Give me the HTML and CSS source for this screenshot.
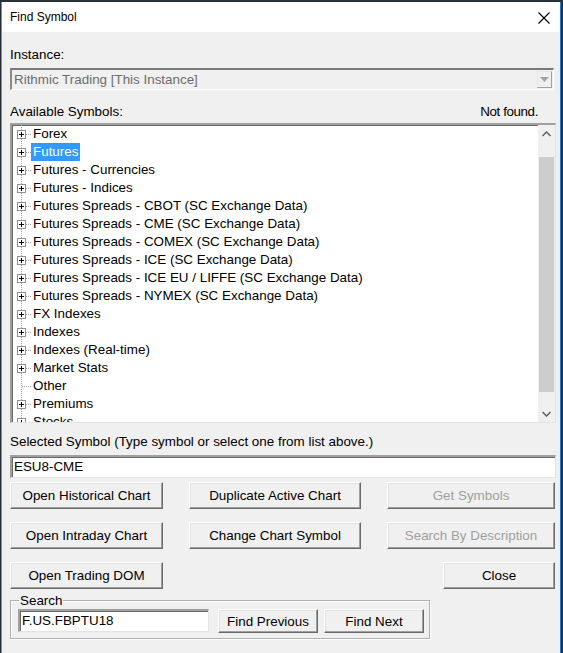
FILE: index.html
```html
<!DOCTYPE html>
<html>
<head>
<meta charset="utf-8">
<title>Find Symbol</title>
<link rel="stylesheet" href="styles.css">
</head>
<body>
<div class="dialog">
  <div class="titlebar">
    <span class="title">Find Symbol</span>
    <svg class="close-x" width="12" height="12" viewBox="0 0 12 12"><path d="M0.5 0.5 L11.5 11.5 M11.5 0.5 L0.5 11.5" stroke="#000" stroke-width="1.1" fill="none"/></svg>
  </div>
  <div class="body">
    <div class="label instance-label">Instance:</div>
    <div class="combo">
      <span class="combo-text">Rithmic Trading [This Instance]</span>
      <span class="combo-btn"><svg width="9" height="5" viewBox="0 0 9 5"><path d="M0 0 H9 L4.5 5 Z" fill="#a3a3a3"/></svg></span>
    </div>
    <div class="label-row">
      <span>Available Symbols:</span>
      <span class="status">Not found.</span>
    </div>
    <div class="tree">
      <ul class="tree-list">
        <li><svg class="twig" width="19" height="18"><use href="#node"/></svg><span class="name">Forex</span></li>
        <li><svg class="twig" width="19" height="18"><use href="#node"/></svg><span class="name selected">Futures</span></li>
        <li><svg class="twig" width="19" height="18"><use href="#node"/></svg><span class="name">Futures - Currencies</span></li>
        <li><svg class="twig" width="19" height="18"><use href="#node"/></svg><span class="name">Futures - Indices</span></li>
        <li><svg class="twig" width="19" height="18"><use href="#node"/></svg><span class="name">Futures Spreads - CBOT (SC Exchange Data)</span></li>
        <li><svg class="twig" width="19" height="18"><use href="#node"/></svg><span class="name">Futures Spreads - CME (SC Exchange Data)</span></li>
        <li><svg class="twig" width="19" height="18"><use href="#node"/></svg><span class="name">Futures Spreads - COMEX (SC Exchange Data)</span></li>
        <li><svg class="twig" width="19" height="18"><use href="#node"/></svg><span class="name">Futures Spreads - ICE (SC Exchange Data)</span></li>
        <li><svg class="twig" width="19" height="18"><use href="#node"/></svg><span class="name">Futures Spreads - ICE EU / LIFFE (SC Exchange Data)</span></li>
        <li><svg class="twig" width="19" height="18"><use href="#node"/></svg><span class="name">Futures Spreads - NYMEX (SC Exchange Data)</span></li>
        <li><svg class="twig" width="19" height="18"><use href="#node"/></svg><span class="name">FX Indexes</span></li>
        <li><svg class="twig" width="19" height="18"><use href="#node"/></svg><span class="name">Indexes</span></li>
        <li><svg class="twig" width="19" height="18"><use href="#node"/></svg><span class="name">Indexes (Real-time)</span></li>
        <li><svg class="twig" width="19" height="18"><use href="#node"/></svg><span class="name">Market Stats</span></li>
        <li><svg class="twig" width="19" height="18"><use href="#leaf"/></svg><span class="name">Other</span></li>
        <li><svg class="twig" width="19" height="18"><use href="#node"/></svg><span class="name">Premiums</span></li>
        <li><svg class="twig" width="19" height="18"><use href="#node"/></svg><span class="name">Stocks</span></li>
      </ul>
      <div class="scrollbar">
        <div class="arrow"><svg width="9" height="6" viewBox="0 0 9 6"><path d="M0.5 5 L4.5 1 L8.5 5" stroke="#606060" stroke-width="1.5" fill="none"/></svg></div>
        <div class="track"><div class="thumb"></div></div>
        <div class="arrow"><svg width="9" height="6" viewBox="0 0 9 6"><path d="M0.5 1 L4.5 5 L8.5 1" stroke="#606060" stroke-width="1.5" fill="none"/></svg></div>
      </div>
    </div>
    <div class="label selected-label">Selected Symbol (Type symbol or select one from list above.)</div>
    <div class="field symbol-field">ESU8-CME</div>
    <div class="button-grid">
      <div class="btn">Open Historical Chart</div>
      <div class="btn">Duplicate Active Chart</div>
      <div class="btn disabled">Get Symbols</div>
      <div class="btn">Open Intraday Chart</div>
      <div class="btn">Change Chart Symbol</div>
      <div class="btn disabled">Search By Description</div>
      <div class="btn">Open Trading DOM</div>
      <div></div>
      <div class="btn close-btn">Close</div>
    </div>
    <fieldset class="search">
      <legend>Search</legend>
      <div class="field search-field">F.US.FBPTU18</div>
      <div class="btn find-btn">Find Previous</div>
      <div class="btn find-btn">Find Next</div>
    </fieldset>
  </div>
</div>

<svg width="0" height="0" class="defs">
  <defs>
    <g id="leaf">
      <path d="M9.5 0 V18" stroke="#a0a0a0" stroke-dasharray="1 1" fill="none"/>
      <path d="M10 9.5 H19" stroke="#a0a0a0" stroke-dasharray="1 1" fill="none"/>
    </g>
    <g id="node">
      <path d="M9.5 0 V18" stroke="#a0a0a0" stroke-dasharray="1 1" fill="none"/>
      <path d="M14 9.5 H19" stroke="#a0a0a0" stroke-dasharray="1 1" fill="none"/>
      <rect x="5.5" y="5.5" width="8" height="8" fill="#fff" stroke="#919191"/>
      <path d="M7 9.5 H12 M9.5 7 V12" stroke="#000" fill="none"/>
    </g>
  </defs>
</svg>
</body>
</html>
```

FILE: styles.css
```css
html, body {
  margin: 0;
  padding: 0;
}

body {
  width: 563px;
  height: 653px;
  overflow: hidden;
  background: #26303a;
  font-family: "Liberation Sans", Arial, sans-serif;
  font-size: 13.4px;
  color: #000;
}

.defs {
  position: absolute;
}

.dialog {
  margin-top: 2px;
  margin-left: 1px;
  width: 560px;
  height: 660px;
  background: #f0f0f0;
  border-left: 1px solid #8a8a8a;
  border-right: 1px solid #1b7bd0;
  box-sizing: border-box;
}

.titlebar {
  height: 30px;
  background: #fff;
  display: flex;
  align-items: center;
  justify-content: space-between;
  padding: 0 10px 0 8px;
}

.title {
  font-size: 12px;
}

.close-x {
  display: block;
  margin-top: 1px;
}

.body {
  padding: 0 5px 0 8px;
  display: flex;
  flex-direction: column;
}

.label {
  line-height: 15px;
}

.instance-label {
  margin-top: 15px;
}

/* disabled drop-down list */
.combo {
  margin-top: 6px;
  height: 22px;
  width: 544px;
  box-sizing: border-box;
  border-style: solid;
  border-width: 2px 1px 1px 2px;
  border-color: #7a7a7a #fff #fff #8a8a8a;
  display: flex;
  align-items: center;
  justify-content: space-between;
}

.combo-text {
  color: #6d6d6d;
  padding-left: 2px;
}

.combo-btn {
  width: 15px;
  height: 17px;
  margin-right: 1px;
  box-sizing: border-box;
  border: 1px solid #e8e8e8;
  border-right-color: #a0a0a0;
  border-bottom-color: #a0a0a0;
  display: flex;
  align-items: center;
  justify-content: center;
}

.label-row {
  margin-top: 14px;
  display: flex;
  justify-content: space-between;
  line-height: 15px;
  padding-right: 17px;
}

.status {
  letter-spacing: -0.4px;
}

/* tree view */
.tree {
  margin-top: 4px;
  width: 546px;
  height: 300px;
  box-sizing: border-box;
  border-style: solid;
  border-width: 2px 1px 1px 2px;
  border-color: #a0a0a0 #e3e3e3 #e3e3e3 #a0a0a0;
  box-shadow: inset 1px 1px 0 #696969;
  background: #fff;
  display: flex;
  overflow: hidden;
}

.tree-list {
  list-style: none;
  margin: 0;
  padding: 0;
  flex: 1;
  overflow: hidden;
}

.tree-list li {
  height: 18px;
  display: flex;
  align-items: center;
}

.twig {
  display: block;
  flex: none;
}

.name {
  padding: 0 2px;
  line-height: 18px;
  white-space: nowrap;
}

.name.selected {
  background: #3399ff;
  color: #fff;
}

.scrollbar {
  width: 17px;
  flex: none;
  background: #f0f0f0;
  display: flex;
  flex-direction: column;
}

.arrow {
  height: 17px;
  display: flex;
  align-items: center;
  justify-content: center;
}

.track {
  flex: 1;
  padding: 15px 1px 13px 1px;
  display: flex;
}

.thumb {
  flex: 1;
  background: #cdcdcd;
}

.selected-label {
  margin-top: 11px;
}

/* sunken edit fields */
.field {
  box-sizing: border-box;
  background: #fff;
  border-style: solid;
  border-width: 2px 1px 1px 2px;
  border-color: #a0a0a0 #e3e3e3 #e3e3e3 #a0a0a0;
  box-shadow: inset 1px 1px 0 #696969;
  line-height: 17px;
  padding-left: 2px;
}

.symbol-field {
  margin-top: 6px;
  width: 546px;
  height: 23px;
  padding-top: 1px;
}

/* push buttons */
.button-grid {
  margin-top: 4px;
  display: grid;
  grid-template-columns: 153px 172px 168px;
  column-gap: 26px;
  row-gap: 13px;
  grid-template-rows: 27px 27px 27px;
}

.btn {
  box-sizing: border-box;
  background: #f0f0f0;
  border: 1px solid;
  border-color: #fff #696969 #696969 #fff;
  box-shadow: inset -1px -1px 0 #a0a0a0, inset 1px 1px 0 #e3e3e3;
  display: flex;
  align-items: center;
  justify-content: center;
  white-space: nowrap;
}

.btn.disabled {
  color: #a0a0a0;
}

.close-btn {
  justify-self: end;
  width: 112px;
}

/* search group box */
.search {
  margin: 5px 0 0 0;
  width: 420px;
  height: 45px;
  box-sizing: border-box;
  border: 1px solid #b0b0b0;
  box-shadow: 1px 1px 0 #fff, inset 1px 1px 0 #fff;
  padding: 0 0 0 7px;
  display: flex;
  align-items: flex-start;
}

.search legend {
  padding: 0 1px;
  margin-left: 1px;
  line-height: 13px;
}

.search-field {
  margin-top: 2px;
  width: 191px;
  height: 23px;
  padding-top: 1px;
}

.find-btn {
  margin-top: 2px;
  width: 100px;
  height: 24px;
}

.search-field + .find-btn {
  margin-left: 9px;
}

.find-btn + .find-btn {
  margin-left: 6px;
}
```
